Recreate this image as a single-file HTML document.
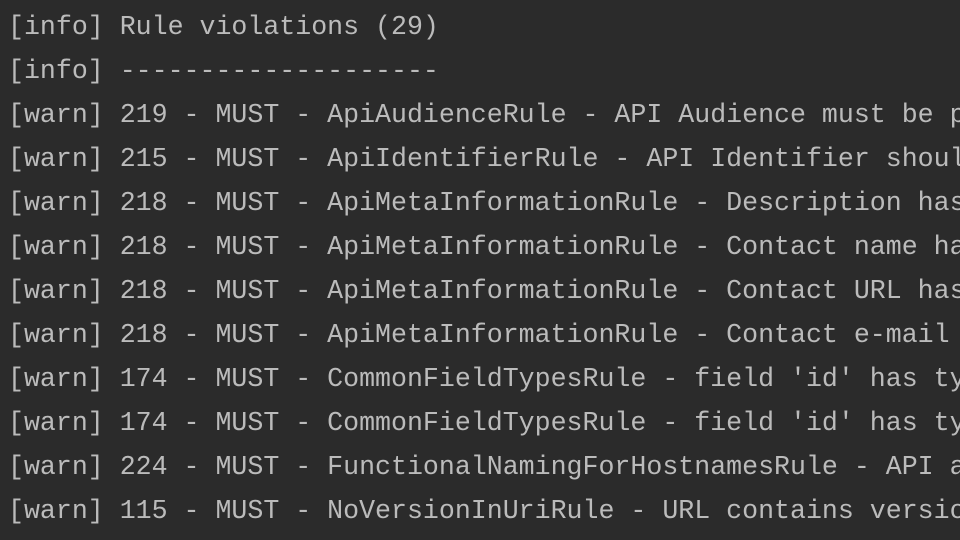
<!DOCTYPE html>
<html><head><meta charset="utf-8"><style>
html,body{margin:0;padding:0;background:#2b2b2b;width:960px;height:540px;overflow:hidden}
pre{margin:0;position:absolute;left:8px;top:5px;width:952px;overflow:hidden;font-family:"Liberation Mono",monospace;font-size:26.6px;line-height:44px;color:#bbbbbb;white-space:pre}
</style></head><body><pre>[info] Rule violations (29)
[info] --------------------
[warn] 219 - MUST - ApiAudienceRule - API Audience must be p
[warn] 215 - MUST - ApiIdentifierRule - API Identifier shoul
[warn] 218 - MUST - ApiMetaInformationRule - Description has
[warn] 218 - MUST - ApiMetaInformationRule - Contact name ha
[warn] 218 - MUST - ApiMetaInformationRule - Contact URL has
[warn] 218 - MUST - ApiMetaInformationRule - Contact e-mail 
[warn] 174 - MUST - CommonFieldTypesRule - field 'id' has ty
[warn] 174 - MUST - CommonFieldTypesRule - field 'id' has ty
[warn] 224 - MUST - FunctionalNamingForHostnamesRule - API a
[warn] 115 - MUST - NoVersionInUriRule - URL contains versio</pre></body></html>
